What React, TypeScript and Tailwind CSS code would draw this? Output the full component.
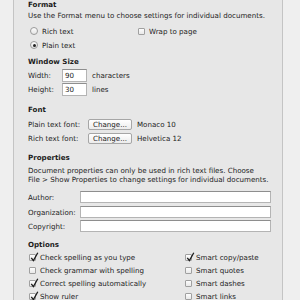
import React from "react";

const font = { fontFamily: '"DejaVu Sans", "Liberation Sans", sans-serif' };

function Radio({ on }: { on?: boolean }) {
  return (
    <span className="flex h-[8px] w-[8px] items-center justify-center rounded-full border border-[#9a9a9a] bg-gradient-to-b from-[#fdfdfd] to-[#e4e4e4]">
      {on && <span className="h-[3px] w-[3px] rounded-full bg-[#222]" />}
    </span>
  );
}

function Check({ on }: { on?: boolean }) {
  return (
    <span className="relative block h-[7px] w-[7px] rounded-[1px] border border-[#a0a0a0] bg-gradient-to-b from-[#fdfdfd] to-[#e8e8e8]">
      {on && (
        <svg className="absolute -top-[3px] left-0" width="9" height="10" viewBox="0 0 9 10">
          <path d="M1.3 5.8 L3.4 8.6 L7.8 0.8" fill="none" stroke="#1b1b1b" strokeWidth="1.3" />
        </svg>
      )}
    </span>
  );
}

function CheckRow({ on, label }: { on?: boolean; label: string }) {
  return (
    <div className="flex h-[13px] items-center gap-[4px] pl-[1px]">
      <Check on={on} />
      <span>{label}</span>
    </div>
  );
}

function Button({ label }: { label: string }) {
  return (
    <span className="flex h-[11px] w-[44px] items-center justify-center rounded-[2px] border border-[#a6a6a6] bg-gradient-to-b from-white to-[#ececec]">
      {label}
    </span>
  );
}

function Field({ label }: { label: string }) {
  return (
    <div className="flex h-[14px] items-center">
      <span className="w-[52px]">{label}</span>
      <span className="h-[12px] w-[191px] border border-[#b4b4b4] border-t-[#8e8e8e] bg-white" />
    </div>
  );
}

export default function App() {
  return (
    <div className="flex h-[300px] w-[300px] overflow-hidden bg-[#efefef] text-[7.1px] leading-[9px] text-[#1c1c1c]" style={font}>
      <div className="w-[13px] shrink-0" />
      <div className="w-[270px] shrink-0 border-x border-[#c4c4c4] bg-[#e7e7e7] pl-[14px]">
        <div className="flex h-[9px] items-center font-bold">Format</div>
        <div className="flex h-[12px] items-center">Use the Format menu to choose settings for individual documents.</div>
        <div className="mt-[3px] flex h-[14px] items-center">
          <div className="flex w-[110px] items-center gap-[4px] pl-[2px]">
            <Radio />
            <span>Rich text</span>
          </div>
          <div className="flex items-center gap-[4px]">
            <Check />
            <span>Wrap to page</span>
          </div>
        </div>
        <div className="flex h-[14px] items-center gap-[4px] pl-[2px]">
          <Radio on />
          <span>Plain text</span>
        </div>

        <div className="mt-[2px] flex h-[14px] items-center font-bold">Window Size</div>
        <div className="flex h-[14px] items-center">
          <span className="w-[34px]">Width:</span>
          <span className="flex h-[13px] w-[25px] items-center border border-[#b4b4b4] border-t-[#8e8e8e] bg-white pl-[2px]">90</span>
          <span className="ml-[5px]">characters</span>
        </div>
        <div className="flex h-[14px] items-center">
          <span className="w-[34px]">Height:</span>
          <span className="flex h-[13px] w-[25px] items-center border border-[#b4b4b4] border-t-[#8e8e8e] bg-white pl-[2px]">30</span>
          <span className="ml-[5px]">lines</span>
        </div>

        <div className="mt-[6px] flex h-[14px] items-center font-bold">Font</div>
        <div className="mt-[1px] flex h-[14px] items-center">
          <span className="w-[60px]">Plain text font:</span>
          <Button label="Change..." />
          <span className="ml-[5px]">Monaco 10</span>
        </div>
        <div className="flex h-[14px] items-center">
          <span className="w-[60px]">Rich text font:</span>
          <Button label="Change..." />
          <span className="ml-[5px]">Helvetica 12</span>
        </div>

        <div className="mt-[5px] flex h-[14px] items-center font-bold">Properties</div>
        <div className="mt-[2px] whitespace-nowrap">
          Document properties can only be used in rich text files. Choose
          <br />
          File &gt; Show Properties to change settings for individual documents.
        </div>
        <div className="mt-[6px]">
          <Field label="Author:" />
          <div className="mt-[1px]" />
          <Field label="Organization:" />
          <Field label="Copyright:" />
        </div>

        <div className="mt-[4px] flex h-[14px] items-center font-bold">Options</div>
        <div className="flex">
          <div className="w-[156px]">
            <CheckRow on label="Check spelling as you type" />
            <CheckRow label="Check grammar with spelling" />
            <CheckRow on label="Correct spelling automatically" />
            <CheckRow on label="Show ruler" />
          </div>
          <div>
            <CheckRow on label="Smart copy/paste" />
            <CheckRow label="Smart quotes" />
            <CheckRow label="Smart dashes" />
            <CheckRow label="Smart links" />
          </div>
        </div>
      </div>
      <div className="flex-1" />
    </div>
  );
}
